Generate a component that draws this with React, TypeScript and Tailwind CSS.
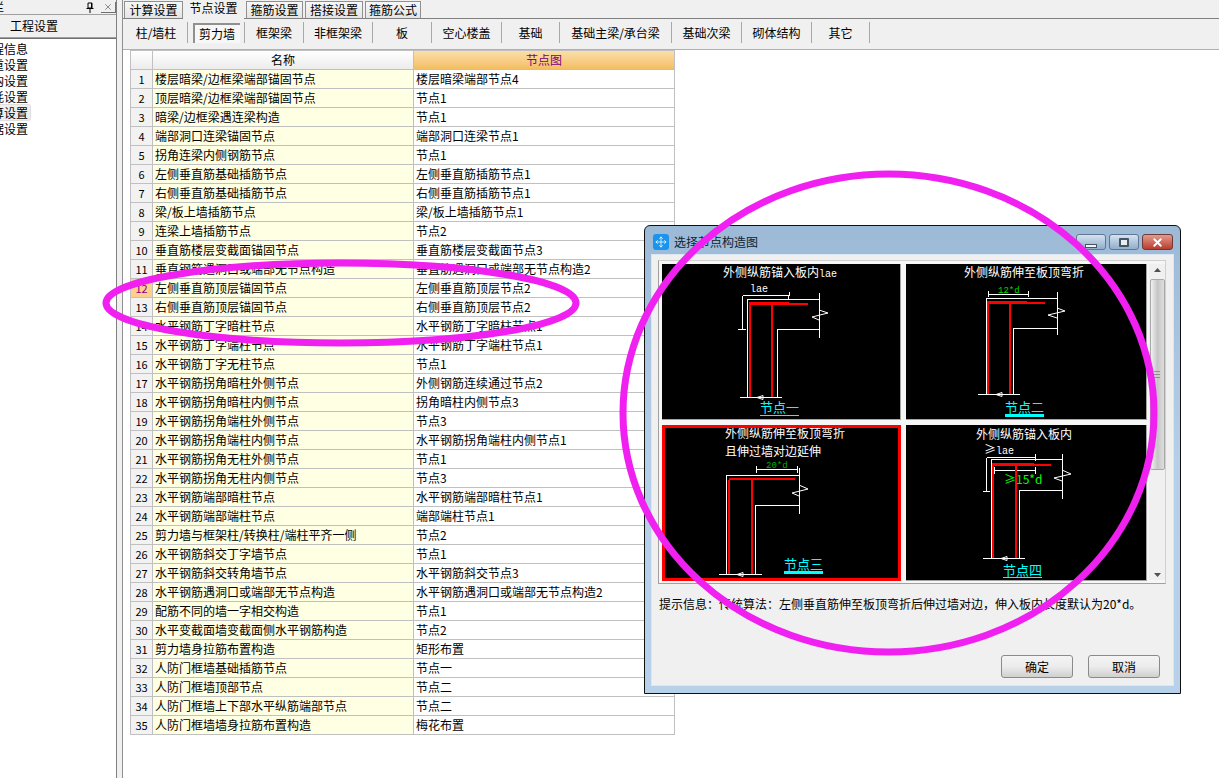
import { Move, X } from 'lucide-react';

const rows: [string, string][] = [
  ['楼层暗梁/边框梁端部锚固节点', '楼层暗梁端部节点4'],
  ['顶层暗梁/边框梁端部锚固节点', '节点1'],
  ['暗梁/边框梁遇连梁构造', '节点1'],
  ['端部洞口连梁锚固节点', '端部洞口连梁节点1'],
  ['拐角连梁内侧钢筋节点', '节点1'],
  ['左侧垂直筋基础插筋节点', '左侧垂直筋插筋节点1'],
  ['右侧垂直筋基础插筋节点', '右侧垂直筋插筋节点1'],
  ['梁/板上墙插筋节点', '梁/板上墙插筋节点1'],
  ['连梁上墙插筋节点', '节点2'],
  ['垂直筋楼层变截面锚固节点', '垂直筋楼层变截面节点3'],
  ['垂直钢筋遇洞口或端部无节点构造', '垂直筋遇洞口或端部无节点构造2'],
  ['左侧垂直筋顶层锚固节点', '左侧垂直筋顶层节点2'],
  ['右侧垂直筋顶层锚固节点', '右侧垂直筋顶层节点2'],
  ['水平钢筋丁字暗柱节点', '水平钢筋丁字暗柱节点1'],
  ['水平钢筋丁字端柱节点', '水平钢筋丁字端柱节点1'],
  ['水平钢筋丁字无柱节点', '节点1'],
  ['水平钢筋拐角暗柱外侧节点', '外侧钢筋连续通过节点2'],
  ['水平钢筋拐角暗柱内侧节点', '拐角暗柱内侧节点3'],
  ['水平钢筋拐角端柱外侧节点', '节点3'],
  ['水平钢筋拐角端柱内侧节点', '水平钢筋拐角端柱内侧节点1'],
  ['水平钢筋拐角无柱外侧节点', '节点1'],
  ['水平钢筋拐角无柱内侧节点', '节点3'],
  ['水平钢筋端部暗柱节点', '水平钢筋端部暗柱节点1'],
  ['水平钢筋端部端柱节点', '端部端柱节点1'],
  ['剪力墙与框架柱/转换柱/端柱平齐一侧', '节点2'],
  ['水平钢筋斜交丁字墙节点', '节点1'],
  ['水平钢筋斜交转角墙节点', '水平钢筋斜交节点3'],
  ['水平钢筋遇洞口或端部无节点构造', '水平钢筋遇洞口或端部无节点构造2'],
  ['配筋不同的墙一字相交构造', '节点1'],
  ['水平变截面墙变截面侧水平钢筋构造', '节点2'],
  ['剪力墙身拉筋布置构造', '矩形布置'],
  ['人防门框墙基础插筋节点', '节点一'],
  ['人防门框墙顶部节点', '节点二'],
  ['人防门框墙上下部水平纵筋端部节点', '节点二'],
  ['人防门框墙墙身拉筋布置构造', '梅花布置'],
];

const sideItems = ['工程信息', '比重设置', '弯钩设置', '损耗设置', '计算设置', '数据设置'];

const tabs = [
  { label: '计算设置', w: 'w-[59px]' },
  { label: '节点设置', w: 'w-[61px]', active: true },
  { label: '箍筋设置', w: 'w-[57px] ml-[2px]' },
  { label: '搭接设置', w: 'w-[58px] ml-[2px]' },
  { label: '箍筋公式', w: 'w-[56px] ml-[2px]' },
];

const subTabs = [
  { label: '柱/墙柱', w: 'w-[63px]' },
  { label: '剪力墙', w: 'w-[57px]', active: true },
  { label: '框架梁', w: 'w-[59px]' },
  { label: '非框架梁', w: 'w-[69px]' },
  { label: '板', w: 'w-[59px]' },
  { label: '空心楼盖', w: 'w-[70px]' },
  { label: '基础', w: 'w-[58px]' },
  { label: '基础主梁/承台梁', w: 'w-[112px]' },
  { label: '基础次梁', w: 'w-[70px]' },
  { label: '砌体结构', w: 'w-[70px]' },
  { label: '其它', w: 'w-[58px]' },
];

function Sidebar() {
  return (
    <div className="w-[117px] h-full shrink-0 flex flex-col bg-[#f0f0f0] border-r border-[#808080] overflow-hidden">
      <div className="h-[15px] shrink-0 flex items-center border-b border-[#a0a0a0] text-[12px] text-black">
        <span className="-ml-[8px] w-[93px]">栏</span>
        <svg width="10" height="11" viewBox="0 0 10 11" className="mr-[6px]">
          <path d="M3 1h4v5H3zM1.500 6.500h7M5 7v4" stroke="#000" fill="none" />
          <path d="M6 1h1v5H6z" fill="#000" />
        </svg>
        <div className="w-[15px] h-[11px] flex items-center justify-center border-b border-r border-[#707070]">
          <X size={10} strokeWidth={1} color="#000" />
        </div>
      </div>
      <div className="h-[23px] shrink-0 flex items-center pl-[10px] text-[12px] text-black border-b border-[#a0a0a0]">工程设置</div>
      <div className="flex-1 bg-white border-t border-[#707070] pt-[1px] text-[12px] text-black overflow-hidden">
        {sideItems.map((item) => (
          <div key={item} className="h-[16px] flex items-center">
            <span
              className={`-ml-[20px] pr-[2px] leading-[15px] rounded-[3px] ${
                item === '计算设置' ? 'bg-[#efefef] border border-[#e0e0e0] border-l-0' : ''
              }`}
            >
              {item}
            </span>
          </div>
        ))}
      </div>
    </div>
  );
}

function TopTabs() {
  return (
    <div className="h-[19px] shrink-0 flex items-end pl-[1px] bg-[#f0f0f0] border-b border-[#808080]">
      {tabs.map((t) => (
        <div
          key={t.label}
          className={`${t.w} flex items-center justify-center text-[12px] text-black ${
            t.active
              ? 'h-[19px] bg-[#f0f0f0] -mb-[1px] pb-[3px]'
              : 'h-[17px] bg-linear-to-b from-[#f7f7f7] to-[#e4e4e4] border border-b-0 border-[#909090]'
          }`}
        >
          {t.label}
        </div>
      ))}
    </div>
  );
}

function SubTabs() {
  return (
    <div className="h-[31px] shrink-0 flex items-start pt-[3px] pl-[2px] bg-[#f0f0f0] border-b border-[#b0b0b0]">
      {subTabs.map((t) => (
        <div key={t.label} className={`${t.w} h-[21px] flex items-center justify-center border-r border-[#a8a8a8]`}>
          {t.active ? (
            <div className="w-[47px] h-[20px] flex items-center justify-center text-[12px] text-black bg-[#f7f7f7] border-l-2 border-t-2 border-[#909090]">
              {t.label}
            </div>
          ) : (
            <span className="text-[12px] text-black">{t.label}</span>
          )}
        </div>
      ))}
    </div>
  );
}

function SheetTable() {
  return (
    <div className="ml-[7px] w-[545px] border-t border-l border-[#c0c0c0] text-[12px] text-black">
      <div className="h-[19px] flex border-b border-[#c0c0c0]">
        <div className="w-[22px] shrink-0 bg-linear-to-b from-white to-[#ececec] border-r border-[#c0c0c0]" />
        <div className="w-[261px] shrink-0 flex items-center justify-center bg-linear-to-b from-white to-[#ececec] border-r border-[#c0c0c0]">
          名称
        </div>
        <div className="w-[261px] shrink-0 flex items-center justify-center text-[#800080] bg-linear-to-b from-[#fadfaa] to-[#f4be60] border-r border-[#c0c0c0]">
          节点图
        </div>
      </div>
      {rows.map(([name, node], i) => (
        <div key={i} className="h-[19px] flex border-b border-[#c0c0c0]">
          <div
            className={`w-[22px] shrink-0 flex items-center justify-center text-[11px] border-r border-[#c0c0c0] ${
              i === 11 ? 'bg-[#ffcf8c] text-[#800080]' : 'bg-[#f2f2f2]'
            }`}
          >
            {i + 1}
          </div>
          <div className="w-[261px] shrink-0 flex items-center pl-[2px] bg-[#ffffe3] border-r border-[#c0c0c0] whitespace-nowrap overflow-hidden">
            {name}
          </div>
          <div className="w-[261px] shrink-0 flex items-center pl-[2px] bg-white border-r border-[#c0c0c0] whitespace-nowrap overflow-hidden">
            {node}
          </div>
        </div>
      ))}
    </div>
  );
}

type Spec = {
  white: string;
  arrows: string;
  red: string;
  redThick: string;
  texts: { x: number; y: number; s: string; mono?: string; fill: string; size?: number }[];
  label: { x: number; y: number; s: string; uy: number; uh: number };
  selected?: boolean;
};

const specs: Spec[] = [
  {
    white: 'M85.500 133.500V35.500H157.500M157.500 29V74M157.500 65.500H115.500V133.500M78 133.500H120M80.500 31.500H128M80.500 31.500V65M76 65H84M128 28L126 35',
    arrows: 'M95 133.500l6 -2v4zM157 46L166 49L150 53L157 56',
    red: 'M88 133V39M110 133V40M88 40H146',
    redThick: 'M87 39H127',
    texts: [
      { x: 61, y: 13, s: '外侧纵筋锚入板内', mono: 'lae', fill: '#fff' },
      { x: 88, y: 28, s: '', mono: 'lae', fill: '#fff' },
    ],
    label: { x: 98, y: 148, s: '节点一', uy: 151, uh: 1 },
  },
  {
    white: 'M80.500 130.500V34.500H151.500M151.500 28V71M151.500 64.500H107.500V130.500M72 130.500H114M81.500 30.500H122M82 27V33M122 27V33',
    arrows: 'M90 130.500l6 -2v4zM151 44L159 47L142 51L151 54',
    red: 'M82 130V38M104 130V39M82 39H139',
    redThick: 'M81 38H121',
    texts: [
      { x: 58, y: 13, s: '外侧纵筋伸至板顶弯折', fill: '#fff' },
      { x: 92, y: 29, s: '', mono: '12*d', fill: '#00d800', size: 9 },
    ],
    label: { x: 99, y: 148, s: '节点二', uy: 150, uh: 3 },
  },
  {
    white: 'M64.500 149.500V50.500H137.500M137.500 43V89M137.500 80.500H93.500V149.500M57 149.500H100M93.500 44.500H135M94 41V48M135 41V48',
    arrows: 'M75 149.500l6 -2v4zM137 60L146 64L130 68L137 71',
    red: 'M67 149V55M90 149V55M67 54H133',
    redThick: '',
    texts: [
      { x: 63, y: 13, s: '外侧纵筋伸至板顶弯折', fill: '#fff' },
      { x: 63, y: 31, s: '且伸过墙对边延伸', fill: '#fff' },
      { x: 104, y: 43, s: '', mono: '20*d', fill: '#00b000', size: 9 },
    ],
    label: { x: 122, y: 144, s: '节点三', uy: 146, uh: 3 },
    selected: true,
  },
  {
    white: 'M85.500 133.500V34.500H156.500M156.500 29V74M156.500 65.500H113.500V133.500M77 133.500H119M80.500 32.500H129M80.500 32.500V66M77 66H84M129 29V36M87.500 45.500H129M88 42V49M129 42V49',
    arrows: 'M95 133.500l6 -2v4zM156 45L165 49L148 53L156 56',
    red: 'M87 133V40M110 133V40M87 40H145',
    redThick: 'M86 39H128',
    texts: [
      { x: 70, y: 14, s: '外侧纵筋锚入板内', fill: '#fff' },
      { x: 78, y: 29, s: '≥', mono: 'lae', fill: '#fff' },
      { x: 98, y: 59, s: '≥15*d', fill: '#00ff00' },
    ],
    label: { x: 97, y: 150, s: '节点四', uy: 152, uh: 1 },
  },
];

function Diagram({ spec }: { spec: Spec }) {
  return (
    <div className={`bg-black h-[156px] ${spec.selected ? 'border-[3px] border-[#ff0000]' : 'border-r border-b border-[#a4a4a4]'}`}>
      <svg
        viewBox={spec.selected ? '3 3 233 150' : undefined}
        className="block w-full h-full font-['Noto_Sans_CJK_SC',sans-serif]"
      >
        <path d={spec.white} stroke="#fff" fill="none" strokeWidth="1" shapeRendering="crispEdges" />
        <path d={spec.arrows} stroke="#fff" fill="none" strokeWidth="1" />
        <path d={spec.red} stroke="#ff0000" fill="none" strokeWidth="2" shapeRendering="crispEdges" />
        {spec.redThick && <path d={spec.redThick} stroke="#ff0000" fill="none" strokeWidth="2" shapeRendering="crispEdges" />}
        {spec.texts.map((t) => (
          <text key={t.s + t.mono} x={t.x} y={t.y} fill={t.fill} fontSize={t.size ?? 12}>
            {t.s}
            {t.mono && (
              <tspan fontFamily="Liberation Mono, monospace" fontSize={t.size ?? 10}>
                {t.mono}
              </tspan>
            )}
          </text>
        ))}
        <text x={spec.label.x} y={spec.label.y} fill="#00ffff" fontSize="13">
          {spec.label.s}
        </text>
        <rect x={spec.label.x} y={spec.label.uy} width="39" height={spec.label.uh} fill="#00ffff" />
      </svg>
    </div>
  );
}

function Scrollbar() {
  return (
    <div className="w-[16px] shrink-0 flex flex-col items-center bg-[#f0f0f0]">
      <svg width="9" height="15" viewBox="0 0 9 15" className="shrink-0">
        <path d="M4.500 4L8 8H1z" fill="#505050" />
      </svg>
      <div className="w-[15px] h-[191px] shrink-0 flex items-center justify-center rounded-[2px] bg-linear-to-r from-[#f2f2f2] via-[#c6c6c6] to-[#dedede] border border-[#a8a8a8]">
        <div className="w-[6px] h-[7px] border-y border-[#909090] flex items-center">
          <div className="w-full h-px bg-[#909090]" />
        </div>
      </div>
      <div className="flex-1" />
      <svg width="9" height="15" viewBox="0 0 9 15" className="shrink-0">
        <path d="M4.500 12L8 8H1z" fill="#505050" />
      </svg>
    </div>
  );
}

function CapButton({ kind }: { kind: 'min' | 'max' | 'close' }) {
  if (kind === 'close') {
    return (
      <div className="w-[31px] h-[16px] flex items-center justify-center rounded-[3px] border border-[#6f3a36] bg-linear-to-b from-[#e19a8e] to-[#b93a2e]">
        <X size={13} strokeWidth={3.5} color="#fff" />
      </div>
    );
  }
  return (
    <div className="w-[30px] h-[16px] flex items-center justify-center rounded-[3px] border border-[#62778f] bg-linear-to-b from-[#d4e2f0] to-[#92aecb]">
      {kind === 'min' ? (
        <div className="w-[12px] h-[4px] mt-[7px] bg-[#f4f4f4] border border-[#445566]" />
      ) : (
        <div className="w-[10px] h-[9px] bg-[#e8eef4] border-2 border-[#445566] rounded-[1px]" />
      )}
    </div>
  );
}

function NodeDialog() {
  return (
    <div className="absolute left-[644px] top-[225px] w-[537px] h-[469px] flex flex-col rounded-t-[6px] border border-[#101010] bg-linear-to-b from-[#9cb9d6] via-[#b6cfe8] to-[#b8d1ea] text-[12px] text-black">
      <div className="h-[28px] shrink-0 flex items-center pt-[4px] pl-[8px] pr-[7px]">
        <div className="w-[16px] h-[16px] flex items-center justify-center rounded-[3px] bg-[#1a94ec]">
          <Move size={12} strokeWidth={1.5} color="#fff" />
        </div>
        <span className="ml-[5px] flex-1 text-[#10222e]">选择节点构造图</span>
        <div className="flex gap-[3px]">
          <CapButton kind="min" />
          <CapButton kind="max" />
          <CapButton kind="close" />
        </div>
      </div>
      <div className="mx-[6px] h-[432px] bg-[#f0f0f0] border border-[#dce6f0] flex flex-col">
        <div className="mt-[5px] ml-[6px] w-[508px] h-[324px] flex gap-[2px] border border-[#d0d0d0] border-l-[#a0a0a0] border-b-[#a0a0a0] bg-[#f6f6f6] p-[3px] pr-0">
          <div className="flex-1 grid grid-cols-[239px_241px] grid-rows-[156px_156px] gap-[5px]">
            {specs.map((s, i) => (
              <Diagram key={i} spec={s} />
            ))}
          </div>
          <Scrollbar />
        </div>
        <div className="mt-[12px] ml-[7px] h-[16px] leading-[16px] whitespace-nowrap">
          提示信息：传统算法：左侧垂直筋伸至板顶弯折后伸过墙对边，伸入板内长度默认为20*d。
        </div>
        <div className="mt-[43px] mr-[13px] flex justify-end gap-[15px]">
          {['确定', '取消'].map((b) => (
            <div
              key={b}
              className="w-[72px] h-[23px] flex items-center justify-center rounded-[3px] border border-[#8a8a8a] bg-linear-to-b from-[#f4f4f4] via-[#ececec] to-[#d0d0d0]"
            >
              {b}
            </div>
          ))}
        </div>
      </div>
    </div>
  );
}

export default function App() {
  return (
    <div className="relative w-[1219px] h-[778px] overflow-hidden flex bg-white font-['Noto_Sans_CJK_SC',sans-serif]">
      <Sidebar />
      <div className="w-[5px] shrink-0 bg-[#f0f0f0]" />
      <div className="flex-1 flex flex-col border-l border-[#909090]">
        <TopTabs />
        <SubTabs />
        <SheetTable />
      </div>
      <NodeDialog />
      <svg className="absolute left-0 top-0 pointer-events-none" width="1219" height="778" viewBox="0 0 1219 778">
        <ellipse cx="341" cy="303" rx="235" ry="40" fill="none" stroke="#f020f0" strokeWidth="7" />
        <ellipse cx="888.500" cy="413" rx="265.500" ry="239" fill="none" stroke="#f020f0" strokeWidth="7" />
      </svg>
    </div>
  );
}
